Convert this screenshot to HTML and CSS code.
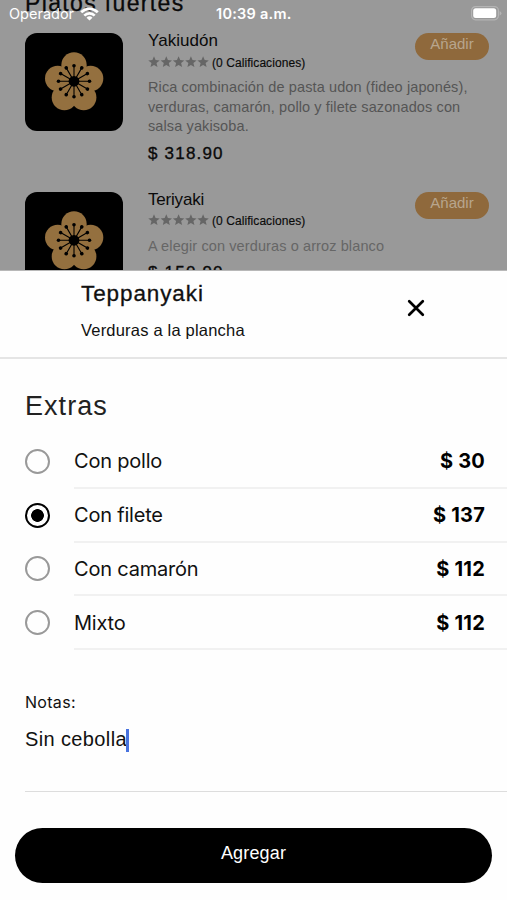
FILE: index.html
```html
<!DOCTYPE html>
<html lang="es">
<head>
<meta charset="utf-8">
<title>Teppanyaki</title>
<link rel="stylesheet" href="styles.css">
</head>
<body>
<svg width="0" height="0" class="defs">
  <defs>
    <path id="star" d="M6 .3l1.600 3.800 4.100.3-3.200 2.700 1 4L6 8.900l-3.500 2.200 1-4L.3 4.400l4.100-.3z"/>
    <g id="stars">
      <use href="#star"/><use href="#star" x="12.3"/><use href="#star" x="24.6"/><use href="#star" x="36.9"/><use href="#star" x="49.1"/>
    </g>
    <g id="spokes">
      <path d="M0-15.500V15.500M-15.500 0H15.500" stroke="#000" stroke-width="1.1"/>
      <circle cy="-15.5" r="1.8"/><circle cy="15.5" r="1.8"/><circle cx="-15.5" r="1.8"/><circle cx="15.5" r="1.8"/>
    </g>
    <g id="flower">
      <g fill="#94703f">
        <circle cx="49" cy="32" r="12.7"/><circle cx="32.7" cy="45.5" r="12.7"/><circle cx="65.6" cy="45.5" r="12.7"/>
        <circle cx="39.4" cy="64.6" r="12.7"/><circle cx="58.7" cy="64.6" r="12.7"/><circle cx="49" cy="50" r="15"/>
      </g>
      <g transform="translate(49 48.3)">
        <use href="#spokes"/><use href="#spokes" transform="rotate(30)"/><use href="#spokes" transform="rotate(60)"/>
        <circle r="5.4"/>
      </g>
    </g>
  </defs>
</svg>

<div class="menu">
  <h2 class="section">Platos fuertes</h2>
  <article class="dish">
    <svg class="photo" viewBox="0 0 98 98"><use href="#flower"/></svg>
    <div class="info">
      <h3 class="name">Yakiudón</h3>
      <div class="rating"><svg class="stars" viewBox="0 0 62 12"><use href="#stars"/></svg><span class="count">(0 Calificaciones)</span></div>
      <p class="desc">Rica combinación de pasta udon (fideo japonés),<br>verduras, camarón, pollo y filete sazonados con<br>salsa yakisoba.</p>
      <div class="price">$ 318.90</div>
    </div>
    <div class="add">Añadir</div>
  </article>
  <article class="dish">
    <svg class="photo" viewBox="0 0 98 98"><use href="#flower"/></svg>
    <div class="info">
      <h3 class="name teri">Teriyaki</h3>
      <div class="rating"><svg class="stars" viewBox="0 0 62 12"><use href="#stars"/></svg><span class="count">(0 Calificaciones)</span></div>
      <p class="desc">A elegir con verduras o arroz blanco</p>
      <div class="price">$ 150.90</div>
    </div>
    <div class="add">Añadir</div>
  </article>
</div>

<div class="status">
  <span class="carrier">Operador</span>
  <svg class="wifi" viewBox="0 0 19 14"><g fill="none" stroke="#fff" stroke-width="2.7"><path d="M1.200 5.200a11.800 11.800 0 0 1 16.600 0M4.300 8.600a7.400 7.400 0 0 1 10.400 0"/></g><path d="M9.500 13.600L6.500 10.700a4.300 4.300 0 0 1 6 0z" fill="#fff"/></svg>
  <span class="time">10:39 a.m.</span>
  <svg class="battery" viewBox="0 0 31 15"><rect x=".6" y=".6" width="26.8" height="13.2" rx="4" fill="none" stroke="#b4b4b4" stroke-width="1.2"/><rect x="2.2" y="2.3" width="23" height="9.8" rx="2.5" fill="#fff"/><path d="M28.600 5v4.600q1.800-.7 1.800-2.300T28.600 5" fill="#b4b4b4"/></svg>
</div>

<main class="sheet">
  <header class="head">
    <div>
      <h1 class="title">Teppanyaki</h1>
      <p class="sub">Verduras a la plancha</p>
    </div>
    <svg class="close" viewBox="0 0 18 18"><path d="M2.200 2.200l13.600 13.600M15.800 2.200L2.200 15.800" stroke="#000" stroke-width="2.7" stroke-linecap="round"/></svg>
  </header>
  <h2 class="extras">Extras</h2>
  <ul class="options">
    <li><i class="radio"></i><div class="row"><span>Con pollo</span><b>$ 30</b></div></li>
    <li><i class="radio on"></i><div class="row"><span>Con filete</span><b>$ 137</b></div></li>
    <li><i class="radio"></i><div class="row"><span>Con camarón</span><b>$ 112</b></div></li>
    <li><i class="radio"></i><div class="row"><span>Mixto</span><b>$ 112</b></div></li>
  </ul>
  <div class="notes">
    <div class="label">Notas:</div>
    <div class="field"><span>Sin cebolla</span><i class="caret"></i></div>
  </div>
  <div class="submit">Agregar</div>
</main>
</body>
</html>
```
FILE: styles.css
```css
* { box-sizing: border-box; margin: 0; padding: 0; }
body { position: relative; width: 507px; height: 900px; overflow: hidden; background: #fefefe; font-family: "Liberation Sans", Arial, sans-serif; color: #111; }
h1, h2, h3 { font-weight: 400; }
span, b { white-space: nowrap; }
.defs { position: absolute; }
.menu { height: 271px; overflow: hidden; background: #999; color: #0a0a0a; padding-left: 25px; padding-right: 18px; border-bottom: 1px solid #b8b8b8; }
.section { height: 33px; margin-left: 0; font-size: 23px; line-height: 6px; letter-spacing: 1.350px; -webkit-text-stroke: .3px #0a0a0a; }
.dish { display: flex; height: 158.700px; }
.photo { width: 98px; height: 98px; background: #000; border-radius: 12px; flex: none; }
.info { width: 267px; margin-left: 25px; flex: none; white-space: nowrap; }
.name { font-size: 17px; line-height: 16px; letter-spacing: .05px; }
.name.teri { letter-spacing: -.2px; }
.rating { display: flex; align-items: center; height: 15px; margin-top: 6px; }
.stars { width: 62px; height: 12px; fill: #666; margin-top: -2px; }
.count { margin-left: 2px; font-size: 12px; letter-spacing: .07px; -webkit-text-stroke: .15px #0a0a0a; }
.desc { margin-top: 8px; font-size: 14.500px; line-height: 19.500px; color: #555; letter-spacing: .11px; }
.dish:last-child .desc { color: #666; }
.price { margin-top: 7px; font-size: 17px; line-height: 20px; letter-spacing: 1.200px; -webkit-text-stroke: .35px #0a0a0a; }
.add { width: 74px; height: 27px; margin-left: auto; border-radius: 14px; background: #8f693c; color: #b8a58d; font-size: 15px; line-height: 21px; text-align: center; }
.status { position: absolute; left: 0; top: 0; width: 507px; height: 28px; color: #fff; display: flex; align-items: center; padding-left: 9px; font: 500 14.500px/28px Inter, sans-serif; }
.carrier { width: 71px; font-weight: 400; }
.wifi { width: 19px; height: 14px; margin-top: -1px; }
.time { margin-left: 117px; width: 80px; font-weight: 600; letter-spacing: .25px; }
.battery { width: 31px; height: 15px; margin-left: auto; margin-right: 5px; margin-top: -1px; }
.head { display: flex; justify-content: space-between; height: 88px; padding: 10px 82px 0 81px; border-bottom: 2px solid #e5e5e5; }
.title { font-size: 22.500px; line-height: 26px; letter-spacing: .900px; -webkit-text-stroke: .3px #111; }
.sub { margin-top: 13px; font-size: 16.500px; line-height: 20px; letter-spacing: .2px; }
.close { width: 18px; height: 18px; margin-top: 18px; }
.extras { margin: 31px 0 0 25px; font-size: 27px; line-height: 32px; letter-spacing: 1.050px; color: #222; }
.options { list-style: none; margin-top: 13px; padding-left: 25px; }
.options li { display: flex; height: 53.800px; align-items: center; }
.radio { width: 25px; height: 25px; margin-top: -1px; border: 2px solid #999; border-radius: 50%; flex: none; }
.radio.on { border: 2.500px solid #000; background: radial-gradient(circle, #000 6px, transparent 6.700px); }
.row { flex: 1; align-self: stretch; display: flex; align-items: center; justify-content: space-between; margin-left: 24px; padding: 1px 22px 0 0; border-bottom: 2px solid #f1f1f1; font: 400 20px Inter, sans-serif; letter-spacing: -.2px; }
.row b { font-weight: 700; color: #000; letter-spacing: .200px; }
.notes { margin: 40px 0 0 25px; height: 102px; border-bottom: 1px solid #ddd; }
.label { font: 400 16px/24px Inter, sans-serif; letter-spacing: .3px; }
.field { display: flex; align-items: center; margin-top: 12px; font-size: 20px; line-height: 24px; letter-spacing: .38px; }
.caret { width: 3px; height: 23px; background: #4973df; margin: 3px 0 0 -1px; }
.submit { margin: 36px 15px 0; height: 55px; border-radius: 28px; background: #000; color: #fff; font-size: 18px; line-height: 50px; letter-spacing: .15px; text-align: center; }
```
